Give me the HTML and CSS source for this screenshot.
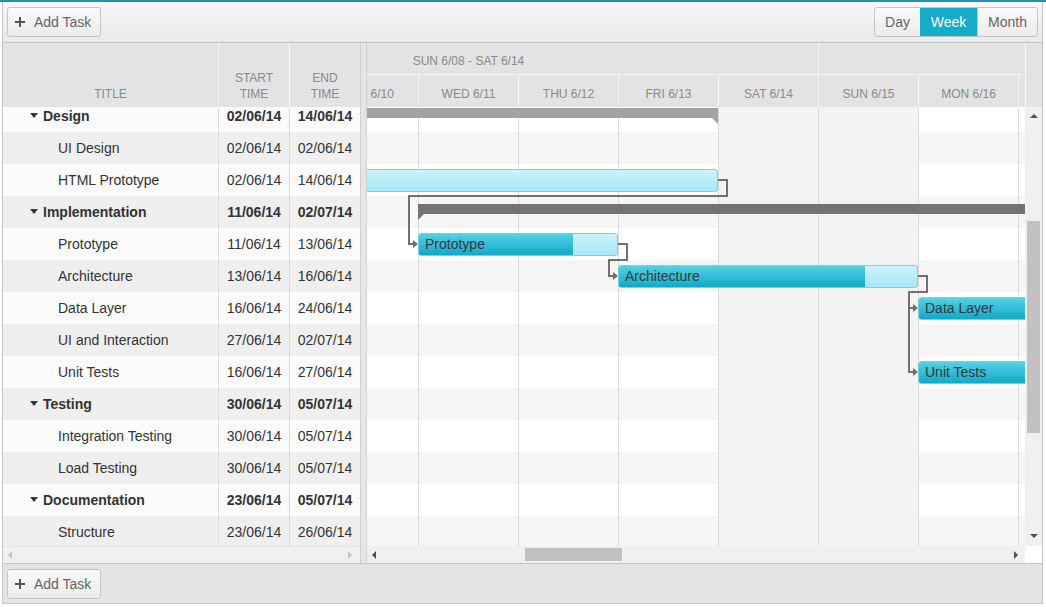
FILE: index.html
```html
<!DOCTYPE html>
<html>
<head>
<meta charset="utf-8">
<link rel="stylesheet" href="styles.css">
</head>
<body>
<div class="topline"></div>
<div class="gantt">
  <div class="toolbar top">
    <button class="btn add"><svg class="plus" width="10" height="10" viewBox="0 0 10 10"><path d="M5 0V10M0 5H10" stroke="#555" stroke-width="2"/></svg>Add Task</button>
    <div class="views"><button class="view v-day">Day</button><button class="view v-week sel">Week</button><button class="view v-month">Month</button></div>
  </div>
  <div class="layout">
    <div class="grid">
      <div class="ghead">
        <div class="hc c-title">TITLE</div>
        <div class="hc c-start"><span>START<br>TIME</span></div>
        <div class="hc c-end"><span>END<br>TIME</span></div>
      </div>
      <div class="gbody">
        <div class="gscroll">
          <div class="grow sum"><div class="c-title"><span class="caret"></span>Design</div><div class="c-start">02/06/14</div><div class="c-end">14/06/14</div></div>
          <div class="grow"><div class="c-title">UI Design</div><div class="c-start">02/06/14</div><div class="c-end">02/06/14</div></div>
          <div class="grow"><div class="c-title">HTML Prototype</div><div class="c-start">02/06/14</div><div class="c-end">14/06/14</div></div>
          <div class="grow sum"><div class="c-title"><span class="caret"></span>Implementation</div><div class="c-start">11/06/14</div><div class="c-end">02/07/14</div></div>
          <div class="grow"><div class="c-title">Prototype</div><div class="c-start">11/06/14</div><div class="c-end">13/06/14</div></div>
          <div class="grow"><div class="c-title">Architecture</div><div class="c-start">13/06/14</div><div class="c-end">16/06/14</div></div>
          <div class="grow"><div class="c-title">Data Layer</div><div class="c-start">16/06/14</div><div class="c-end">24/06/14</div></div>
          <div class="grow"><div class="c-title">UI and Interaction</div><div class="c-start">27/06/14</div><div class="c-end">02/07/14</div></div>
          <div class="grow"><div class="c-title">Unit Tests</div><div class="c-start">16/06/14</div><div class="c-end">27/06/14</div></div>
          <div class="grow sum"><div class="c-title"><span class="caret"></span>Testing</div><div class="c-start">30/06/14</div><div class="c-end">05/07/14</div></div>
          <div class="grow"><div class="c-title">Integration Testing</div><div class="c-start">30/06/14</div><div class="c-end">05/07/14</div></div>
          <div class="grow"><div class="c-title">Load Testing</div><div class="c-start">30/06/14</div><div class="c-end">05/07/14</div></div>
          <div class="grow sum"><div class="c-title"><span class="caret"></span>Documentation</div><div class="c-start">23/06/14</div><div class="c-end">05/07/14</div></div>
          <div class="grow"><div class="c-title">Structure</div><div class="c-start">23/06/14</div><div class="c-end">26/06/14</div></div>
        </div>
      </div>
      <div class="ghbar"><span class="arr-l dim"></span><span class="arr-r dim"></span></div>
    </div>
    <div class="splitter"></div>
    <div class="timeline">
      <div class="thead">
        <div class="thead-clip">
          <div class="thead-in">
            <div class="weeks"><div class="week">SUN 6/08 - SAT 6/14</div><div class="week"></div></div>
            <div class="days">
              <div class="day"></div><div class="day"></div><div class="day">TUE 6/10</div><div class="day">WED 6/11</div><div class="day">THU 6/12</div><div class="day">FRI 6/13</div><div class="day">SAT 6/14</div>
              <div class="day">SUN 6/15</div><div class="day">MON 6/16</div><div class="day"></div><div class="day"></div><div class="day"></div><div class="day"></div><div class="day"></div>
            </div>
          </div>
        </div>
        <div class="thead-spacer"></div>
      </div>
      <div class="tbody">
        <div class="tview">
          <div class="tcanvas">
            <div class="trow"></div><div class="trow"></div><div class="trow"></div><div class="trow"></div><div class="trow"></div><div class="trow"></div><div class="trow"></div>
            <div class="trow"></div><div class="trow"></div><div class="trow"></div><div class="trow"></div><div class="trow"></div><div class="trow"></div><div class="trow"></div>
            <div class="cols">
              <div class="col we"></div><div class="col"></div><div class="col"></div><div class="col"></div><div class="col"></div><div class="col"></div><div class="col we"></div>
              <div class="col we"></div><div class="col"></div><div class="col"></div><div class="col"></div><div class="col"></div><div class="col"></div><div class="col we"></div>
            </div>
            <div class="sumbar done end-r" style="left:-200px;top:8px;width:800px"></div>
            <div class="task" style="left:-200px;top:69px;width:800px"></div>
            <div class="sumbar start-l" style="left:300px;top:104px;width:1000px"></div>
            <div class="task" style="left:300px;top:133px;width:200px"><div class="prog" style="width:154px"></div><span class="lbl">Prototype</span></div>
            <div class="task" style="left:500px;top:165px;width:300px"><div class="prog" style="width:246px"></div><span class="lbl">Architecture</span></div>
            <div class="task" style="left:800px;top:197px;width:500px"><div class="prog" style="width:100%"></div><span class="lbl">Data Layer</span></div>
            <div class="task" style="left:800px;top:261px;width:500px"><div class="prog" style="width:100%"></div><span class="lbl">Unit Tests</span></div>
            <svg class="deps" width="1400" height="448" viewBox="0 0 1400 448">
              <g fill="none" stroke="#707070" stroke-width="2">
                <path d="M600 80H609V96H291V144H296"/>
                <path d="M500 144H509V160H491V176H496"/>
                <path d="M800 176H809V192H791V272H796M791 208H796"/>
              </g>
              <g fill="#707070">
                <polygon points="295,140 300,144 295,148"/>
                <polygon points="495,172 500,176 495,180"/>
                <polygon points="795,204 800,208 795,212"/>
                <polygon points="795,268 800,272 795,276"/>
              </g>
            </svg>
          </div>
        </div>
        <div class="vbar"><span class="arr-u"></span><span class="vthumb"></span><span class="arr-d"></span></div>
      </div>
      <div class="thbar">
        <div class="htrack"><span class="arr-l"></span><span class="hthumb"></span><span class="arr-r"></span></div>
        <div class="corner"></div>
      </div>
    </div>
  </div>
  <div class="toolbar bottom">
    <button class="btn add"><svg class="plus" width="10" height="10" viewBox="0 0 10 10"><path d="M5 0V10M0 5H10" stroke="#555" stroke-width="2"/></svg>Add Task</button>
  </div>
</div>
</body>
</html>
```
FILE: styles.css
```css
* { box-sizing: border-box; }
html, body { margin: 0; padding: 0; background: #fff; }
body { font-family: "Liberation Sans", Arial, sans-serif; font-size: 14px; color: #333; }

.topline { height: 2px; background: #2590aa; }

.gantt {
  margin: 0 3px 0 2px;
  border: 1px solid #c5c5c5;
  border-top: 0;
}

.toolbar {
  display: flex;
  justify-content: space-between;
  padding: 0 4px 0 4px;
}
.toolbar.top {
  height: 41px;
  align-items: center;
  border-bottom: 1px solid #c5c5c5;
  background: linear-gradient(#f7f7f7, #e9e9e9);
}
.toolbar.bottom {
  height: 40px;
  align-items: flex-start;
  padding-top: 5px;
  border-top: 1px solid #c5c5c5;
  background: #e4e4e4;
}

.btn {
  height: 30px;
  display: inline-flex;
  align-items: center;
  padding: 0 9px 0 7px;
  border: 1px solid #c5c5c5;
  border-radius: 3px;
  background: linear-gradient(#fafafa, #ececec);
  font-family: "Liberation Sans", Arial, sans-serif;
  font-size: 14px;
  color: #656565;
  margin: 0;
}
.btn .plus { margin-right: 9px; }

.views {
  display: flex;
  height: 30px;
  border: 1px solid #c5c5c5;
  border-radius: 3px;
  overflow: hidden;
  background: linear-gradient(#fafafa, #ececec);
}
.view {
  border: 0;
  margin: 0;
  padding: 0;
  background: transparent;
  font-family: "Liberation Sans", Arial, sans-serif;
  font-size: 14px;
  color: #656565;
  text-align: center;
}
.v-day { width: 45px; }
.v-week { width: 57px; }
.v-month { width: 60px; border-left: 1px solid #c5c5c5; }
.view.sel { background: #16abc9; color: #fff; }

.layout { display: flex; height: 520px; }

/* Grid */
.grid { width: 357px; display: flex; flex-direction: column; }
.ghead {
  height: 64px;
  display: flex;
  background: #e3e3e3;
}
.hc {
  display: flex;
  align-items: flex-end;
  justify-content: center;
  text-align: center;
  padding-bottom: 5px;
  font-size: 12px;
  line-height: 16px;
  color: #8a8a8a;
}
.ghead .c-title, .ghead .c-start { border-right: 1px solid #f7f7f7; }
.c-title { width: 216px; }
.c-start { width: 71px; }
.c-end { width: 70px; }

.gbody { height: 439px; overflow: hidden; }
.gscroll { margin-top: -7px; }
.grow { display: flex; height: 32px; line-height: 32px; }
.grow:nth-child(odd) { background: #fbfbfb; }
.grow:nth-child(even) { background: #efefef; }
.grow .c-title, .grow .c-start { border-right: 1px solid #d9d9d9; }
.grow .c-title { padding-left: 55px; white-space: nowrap; }
.grow .c-start, .grow .c-end { text-align: center; }
.grow.sum { font-weight: bold; }
.grow.sum .c-title { padding-left: 27px; }
.caret {
  display: inline-block;
  width: 0; height: 0;
  border-left: 4px solid transparent;
  border-right: 4px solid transparent;
  border-top: 5px solid #333;
  margin-right: 5px;
  vertical-align: 3px;
}

.ghbar {
  height: 17px;
  display: flex;
  align-items: center;
  justify-content: space-between;
  padding: 0 8px 0 5px;
  background: #f0f0f0;
  border-top: 1px solid #e2e2e2;
}

.arr-l, .arr-r, .arr-u, .arr-d { display: block; width: 0; height: 0; }
.arr-l { border-top: 4px solid transparent; border-bottom: 4px solid transparent; border-right: 4px solid #505050; }
.arr-r { border-top: 4px solid transparent; border-bottom: 4px solid transparent; border-left: 4px solid #505050; }
.arr-l.dim { border-right-color: #c4c4c4; }
.arr-r.dim { border-left-color: #c4c4c4; }
.arr-u { border-left: 4px solid transparent; border-right: 4px solid transparent; border-bottom: 4px solid #505050; }
.arr-d { border-left: 4px solid transparent; border-right: 4px solid transparent; border-top: 4px solid #505050; }

.splitter {
  width: 7px;
  background: #e6e6e6;
  border-left: 1px solid #d0d0d0;
  border-right: 1px solid #d3d3d3;
}

/* Timeline */
.timeline { width: 675px; display: flex; flex-direction: column; }
.thead { height: 64px; display: flex; background: #e3e3e3; }
.thead-clip { width: 658px; overflow: hidden; }
.thead-in { width: 1400px; margin-left: -249px; }
.thead-spacer { width: 17px; border-left: 1px solid #f7f7f7; }
.weeks { display: flex; height: 32px; border-bottom: 1px solid #f7f7f7; }
.week {
  width: 700px;
  border-left: 1px solid #f7f7f7;
  text-align: center;
  padding-top: 4px;
  line-height: 28px;
  font-size: 12px;
  color: #8a8a8a;
}
.days { display: flex; height: 32px; }
.day {
  width: 100px;
  flex: none;
  border-left: 1px solid #f7f7f7;
  text-align: center;
  padding-top: 5px;
  line-height: 28px;
  font-size: 12px;
  color: #8a8a8a;
  white-space: nowrap;
}

.tbody { height: 439px; display: flex; }
.tview { width: 658px; overflow: hidden; position: relative; background: #fff; }
.tcanvas { position: relative; width: 1400px; margin-left: -249px; margin-top: -7px; }
.trow { height: 32px; }
.trow:nth-child(odd) { background: #fff; }
.trow:nth-child(even) { background: #f5f5f5; }
.cols { position: absolute; left: 0; top: 0; bottom: 0; display: flex; }
.col { width: 100px; flex: none; border-left: 1px solid #dadada; }
.col.we { background: #f3f3f3; }

.sumbar { position: absolute; height: 10px; background: #737373; }
.sumbar.done { background: #a3a3a3; }
.sumbar.end-r::after {
  content: "";
  position: absolute;
  right: 0; top: 10px;
  border-top: 6px solid #a3a3a3;
  border-left: 6px solid transparent;
}
.sumbar.start-l::before {
  content: "";
  position: absolute;
  left: 0; top: 10px;
  border-top: 6px solid #737373;
  border-right: 6px solid transparent;
}

.task {
  position: absolute;
  height: 23px;
  border: 1px solid #72d2e7;
  border-radius: 3px;
  background: linear-gradient(#cbf4fa, #a8e7f3);
  overflow: hidden;
  white-space: nowrap;
}
.prog {
  position: absolute;
  left: 0; top: 0; bottom: 0;
  background: linear-gradient(#56d0e6, #12a9c8);
}
.lbl {
  position: relative;
  display: block;
  padding-left: 6px;
  line-height: 21px;
  font-size: 14px;
  color: #2d393c;
}
.deps { position: absolute; left: 0; top: 0; }

.vbar {
  width: 17px;
  background: #f0f0f0;
  display: flex;
  flex-direction: column;
  align-items: center;
}
.arr-u { margin-top: 7px; }
.vthumb { display: block; width: 13px; height: 212px; margin-top: 103px; background: #c1c1c1; }
.arr-d { margin-top: auto; margin-bottom: 8px; }

.thbar { height: 17px; display: flex; }
.htrack {
  width: 658px;
  display: flex;
  align-items: center;
  background: #f0f0f0;
  padding-left: 5px;
}
.hthumb { display: block; width: 97px; height: 13px; margin-left: 149px; background: #c1c1c1; }
.htrack .arr-r { margin-left: auto; margin-right: 7px; }
.corner { width: 17px; background: #fff; }
```
